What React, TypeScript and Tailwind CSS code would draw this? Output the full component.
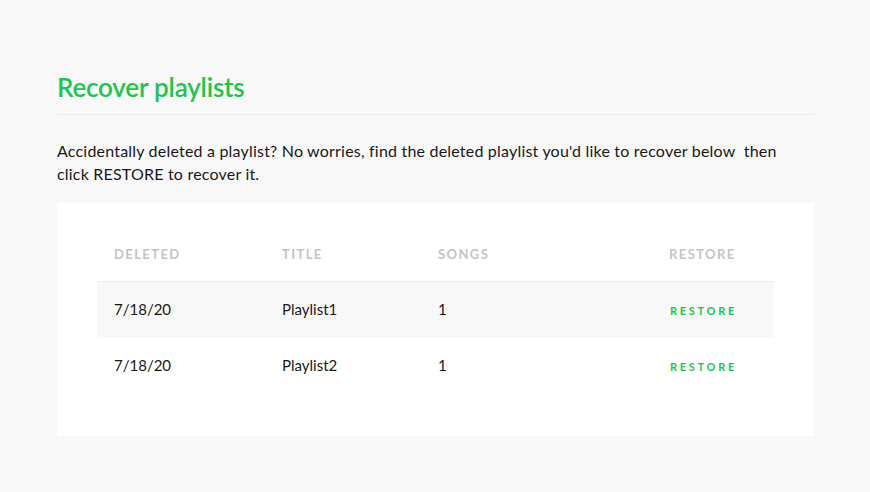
const rows = [
  { deleted: '7/18/20', title: 'Playlist1', songs: '1' },
  { deleted: '7/18/20', title: 'Playlist2', songs: '1' },
];

export default function App() {
  return (
    <div className="min-h-screen w-full bg-[#f8f8f8] font-['Lato',sans-serif] text-[#181818]">
      <div className="ml-[57px] mr-[56px] pt-[70px]">
        {/* Header */}
        <h1 className="border-b border-[#ebebeb] pb-[10px] text-[26px] font-semibold leading-[34px] tracking-[-0.2px] text-[#1cc64e]">
          Recover playlists
        </h1>

        <p className="mt-[24px] pr-[20px] text-[16px] leading-[23px] tracking-[0.2px]">
          Accidentally deleted a playlist? No worries, find the deleted playlist you'd like to recover below&nbsp; then click RESTORE to recover it.
        </p>

        {/* Table card */}
        <div className="mt-[18px] bg-white px-[40px] pt-[42px] pb-[42px]">
          <div className="grid grid-cols-[168px_156px_231px_1fr] border-b border-[#ebebeb] pb-[16px] text-[13px] font-bold uppercase tracking-[1.4px] text-[#c4c4c8]">
            <div className="pl-[17px]">Deleted</div>
            <div className="pl-[17px]">Title</div>
            <div className="pl-[17px]">Songs</div>
            <div className="pl-[17px]">Restore</div>
          </div>
          {rows.map((r, i) => (
            <div
              key={r.title}
              className={`grid h-[56px] grid-cols-[168px_156px_231px_1fr] items-center text-[15px] ${i === 0 ? 'bg-[#f8f8f8]' : ''}`}
            >
              <div className="pl-[17px]">{r.deleted}</div>
              <div className="pl-[17px]">{r.title}</div>
              <div className="pl-[17px]">{r.songs}</div>
              <div className="pl-[18px]">
                <button className="text-[11px] font-bold uppercase tracking-[2.7px] text-[#1cc64e]">Restore</button>
              </div>
            </div>
          ))}
        </div>
      </div>
    </div>
  );
}
